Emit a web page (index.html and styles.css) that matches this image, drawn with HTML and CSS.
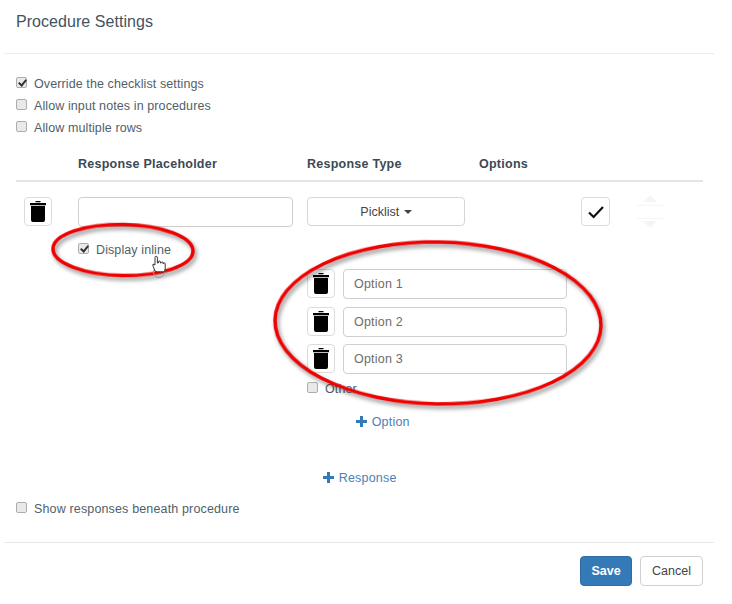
FILE: index.html
```html
<!DOCTYPE html>
<html lang="en">
<head>
  <meta charset="UTF-8">
  <title>Procedure Settings</title>
  <meta name="viewport" content="width=device-width, initial-scale=1.0">
  <link rel="stylesheet" href="styles.css">
</head>
<body>

  <svg width="0" height="0" class="defs">
    <symbol id="trash" viewBox="0 0 16 21">
      <path d="M5.500 1.200h5V0h-5zM0 2h16v2.200H0zM1 5h14v14a2 2 0 0 1-2 2H3a2 2 0 0 1-2-2z"/>
    </symbol>
  </svg>

  <div class="modal">
    <header class="modal-header">
      <h1>Procedure Settings</h1>
    </header>

    <div class="modal-body">
      <label class="check"><input type="checkbox" checked> Override the checklist settings</label>
      <label class="check"><input type="checkbox"> Allow input notes in procedures</label>
      <label class="check"><input type="checkbox"> Allow multiple rows</label>

      <div class="grid grid-head">
        <span></span>
        <span>Response Placeholder</span>
        <span>Response Type</span>
        <span>Options</span>
      </div>

      <div class="grid grid-row">
        <button class="icon-btn trash-first"><svg class="trash"><use href="#trash"/></svg></button>
        <div class="text-input wide"></div>
        <button class="picklist">Picklist <i class="caret"></i></button>
        <span></span>
        <button class="icon-btn done">
          <svg width="18" height="14" viewBox="0 0 18 14"><path d="M2 7.500l4.600 4.500L16 2" fill="none" stroke="#111" stroke-width="2.200"/></svg>
        </button>
        <div class="sort">
          <svg width="28" height="33" viewBox="0 0 28 33">
            <path d="M13 0l7 7H6z" fill="#f5f5f5"/>
            <path d="M0 10.500h26M0 23.500h26" stroke="#f5f5f5"/>
            <path d="M13 33l-7-7h14z" fill="#f5f5f5"/>
          </svg>
        </div>
      </div>

      <label class="check inline-check"><input type="checkbox" checked> Display inline</label>

      <div class="options">
        <div class="option">
          <button class="icon-btn"><svg class="trash"><use href="#trash"/></svg></button>
          <div class="text-input">Option 1</div>
        </div>
        <div class="option">
          <button class="icon-btn"><svg class="trash"><use href="#trash"/></svg></button>
          <div class="text-input">Option 2</div>
        </div>
        <div class="option">
          <button class="icon-btn"><svg class="trash"><use href="#trash"/></svg></button>
          <div class="text-input">Option 3</div>
        </div>
        <label class="check other"><input type="checkbox"> Other</label>
        <a class="add add-option" href="#"><i class="plus"></i> Option</a>
      </div>

      <a class="add add-response" href="#"><i class="plus"></i> Response</a>

      <label class="check show"><input type="checkbox"> Show responses beneath procedure</label>
    </div>

    <footer class="modal-footer">
      <button class="btn btn-primary">Save</button>
      <button class="btn">Cancel</button>
    </footer>
  </div>

  <!-- hand drawn annotations on top of the screenshot -->
  <svg class="annotations" width="732" height="604" viewBox="0 0 732 604">
    <g class="rings">
      <ellipse cx="123" cy="250" rx="70" ry="25.500" transform="rotate(1 123 250)"/>
      <ellipse cx="438" cy="323" rx="163" ry="81" transform="rotate(1 438 323)"/>
    </g>
    <circle cx="159" cy="272" r="5.500" fill="none" stroke="#999" stroke-width="1"/>
    <path d="M155 271l-2-5v-2l2 1v-7.500a1.200 1.200 0 0 1 2.400 0v5.500h1v-1a1 1 0 0 1 2 0v1h.8a1 1 0 0 1 2 0v.8a1 1 0 0 1 2 0v5l-1 3h-7z" fill="#fff" stroke="#222" stroke-width=".9"/>
  </svg>

</body>
</html>
```

FILE: styles.css
```css
* {
  box-sizing: border-box;
  margin: 0;
  padding: 0;
}

body {
  position: relative;
  width: 732px;
  height: 604px;
  overflow: hidden;
  background: #fff;
  font-family: "Liberation Sans", Arial, sans-serif;
  font-size: 12.500px;
  color: #4f5f6a;
}

.defs {
  position: absolute;
}

.modal {
  width: 710px;
  margin-left: 4px;
}

.modal-header {
  height: 54px;
  padding: 13px 12px 0;
  border-bottom: 1px solid #ececec;
}

h1 {
  font-size: 16px;
  font-weight: normal;
  line-height: 18px;
  letter-spacing: .05px;
  color: #43535e;
}

.modal-body {
  height: 488px;
  padding: 19px 11px 0 12px;
}

.check {
  display: flex;
  align-items: center;
  gap: 7px;
  height: 22px;
  letter-spacing: .1px;
}

.check input {
  appearance: none;
  position: relative;
  flex: none;
  width: 11px;
  height: 11px;
  margin-bottom: 3px;
  border: 1px solid #adadad;
  border-radius: 2px;
  background: #e9e9e9;
}

.check input:checked::after {
  content: "";
  position: absolute;
  left: 3px;
  top: 0;
  width: 3px;
  height: 6px;
  border: solid #333;
  border-width: 0 2px 2px 0;
  transform: rotate(40deg);
}

.grid {
  display: grid;
  grid-template-columns: 62px 229px 172px 102px 56px 1fr;
}

.grid-head {
  height: 29px;
  margin-top: 14px;
  padding-top: 4px;
  border-bottom: 2px solid #e4e4e4;
  font-weight: bold;
  color: #3b4a54;
  letter-spacing: .25px;
}

.grid-row {
  margin-top: 15px;
  align-items: start;
}

.icon-btn {
  display: flex;
  align-items: center;
  justify-content: center;
  flex: none;
  width: 28px;
  height: 29px;
  background: #fff;
  border: 1px solid #dcdcdc;
  border-radius: 4px;
}

.trash-first {
  margin-left: 8px;
}

.trash {
  width: 16px;
  height: 21px;
}

.done {
  width: 29px;
}

.text-input {
  flex: 1;
  height: 30px;
  padding: 0 10px;
  line-height: 28px;
  background: #fff;
  border: 1px solid #cfcfcf;
  border-radius: 4px;
  color: #6d6d6d;
  letter-spacing: .2px;
}

.wide {
  width: 215px;
  flex: none;
}

.picklist {
  width: 158px;
  height: 29px;
  background: #fff;
  border: 1px solid #d6d6d6;
  border-radius: 4px;
  font: inherit;
  color: #444;
}

.caret {
  display: inline-block;
  margin-left: 1px;
  vertical-align: middle;
  border-top: 4px solid #444;
  border-left: 4px solid transparent;
  border-right: 4px solid transparent;
}

.sort {
  margin-top: -2px;
}

.inline-check {
  margin: 8px 0 0 62px;
}

.options {
  width: 260px;
  margin: 8px 0 0 291px;
}

.option {
  display: flex;
  gap: 8px;
  margin-bottom: 7.500px;
}

.other {
  margin-top: -2px;
  height: 18px;
}

.add {
  display: block;
  color: #4d7fb5;
  text-decoration: none;
  letter-spacing: .2px;
}

.plus {
  display: inline-block;
  width: 11px;
  height: 11px;
  margin-right: 1px;
  vertical-align: -1px;
  background:
    linear-gradient(#337ab7, #337ab7) center / 100% 3px no-repeat,
    linear-gradient(#337ab7, #337ab7) center / 3px 100% no-repeat;
}

.add-option {
  margin: 17px 0 0 49px;
}

.add-response {
  margin: 42px 0 0 307px;
}

.show {
  margin-top: 13px;
  letter-spacing: .15px;
}

.modal-footer {
  display: flex;
  justify-content: flex-end;
  gap: 8px;
  height: 58px;
  padding: 13px 11px 0 0;
  border-top: 1px solid #e8e8e8;
}

.btn {
  width: 63px;
  height: 30px;
  background: #fff;
  border: 1px solid #d0d0d0;
  border-radius: 4px;
  font: inherit;
  color: #444;
}

.btn-primary {
  width: 52px;
  background: #337ab7;
  border-color: #2e6da4;
  color: #fff;
  font-weight: bold;
}

.annotations {
  position: absolute;
  left: 0;
  top: 0;
  pointer-events: none;
}

.rings {
  fill: none;
  stroke: #f00000;
  stroke-width: 3.500px;
  filter: drop-shadow(2px 3px 2px rgba(0, 0, 0, .45));
}
```
